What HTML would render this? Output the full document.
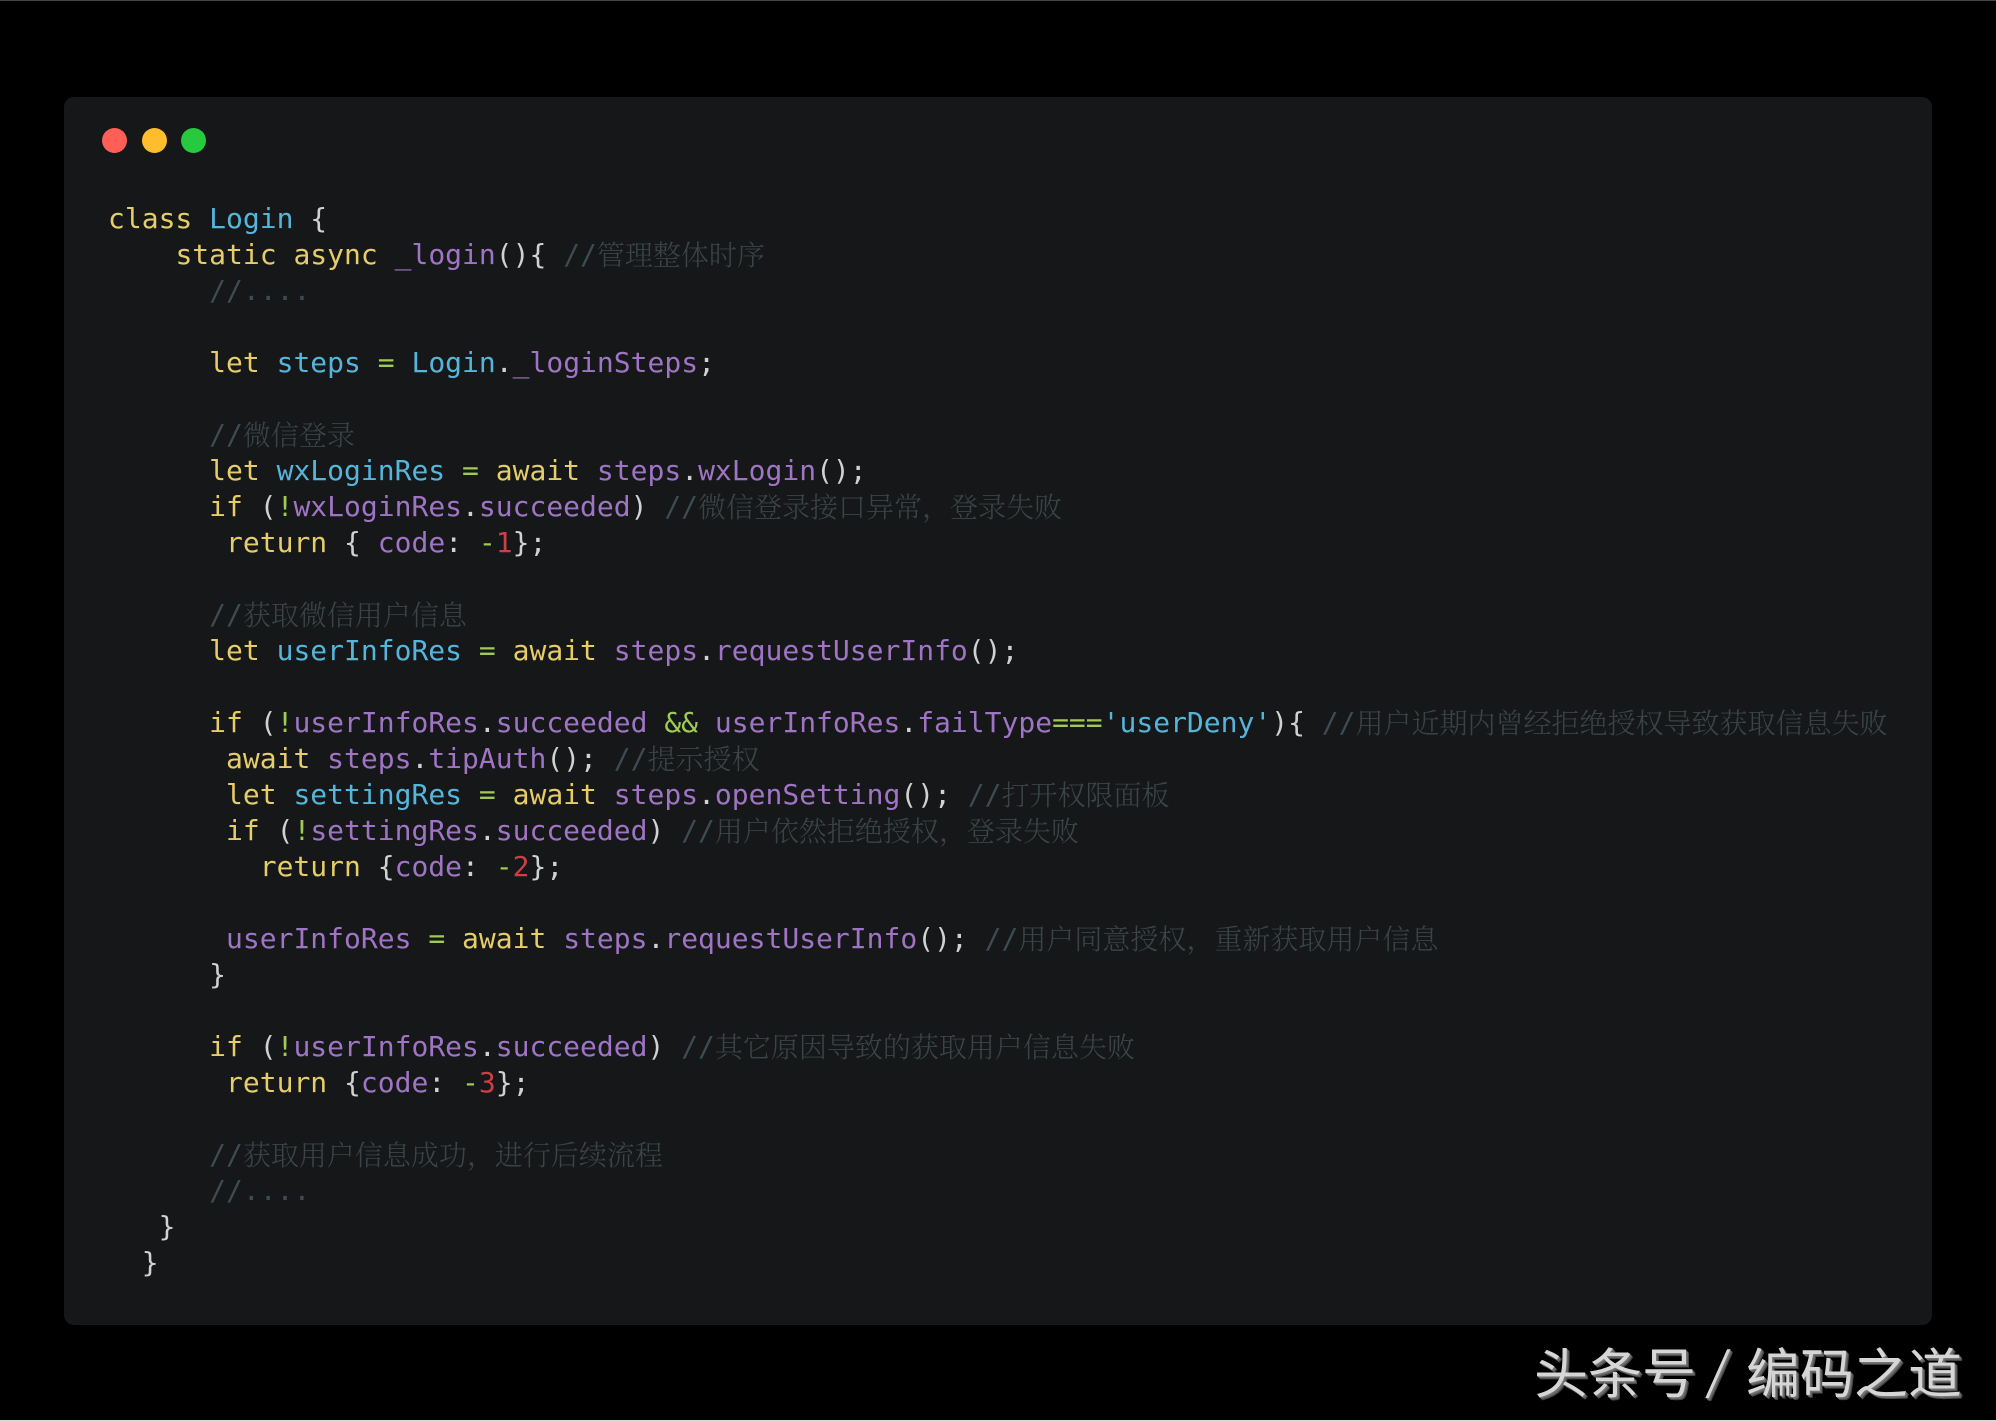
<!DOCTYPE html>
<html lang="zh">
<head>
<meta charset="utf-8">
<title>Code</title>
<style>
html,body{margin:0;padding:0;background:#000;}
body{position:relative;width:1996px;height:1422px;overflow:hidden;}
.tl{position:absolute;left:0;top:0;width:1996px;height:1px;background:#444;}
.bl{position:absolute;left:0;top:1420px;width:1996px;height:2px;background:#d8d8d8;}
.card{position:absolute;left:64px;top:97px;width:1868px;height:1228px;background:#151718;border-radius:10px;}
.dot{position:absolute;top:128px;width:25px;height:25px;border-radius:50%;}
pre{position:absolute;left:108px;top:201px;margin:0;font-family:"DejaVu Sans Mono","Noto Serif CJK SC",monospace;font-size:28px;line-height:36px;color:#cfd2d1;white-space:pre;}
.k{color:#e6cd69}.b{color:#55b5db}.p{color:#a074c4}.o{color:#9fca56}.n{color:#cd3f45}
.c{color:#3c4c52;}
.z{color:#3a4447;position:relative;top:1px;font-style:normal;font-weight:300;}
.wm{position:absolute;top:1333px;font-family:"Noto Sans CJK SC","Liberation Sans",sans-serif;font-size:54px;line-height:74px;color:#d6d6d6;white-space:pre;text-shadow:1px 1px 0 #777,2px 2px 0 #666,3px 3px 0 #444;}
</style>
</head>
<body>
<div class="tl"></div>
<div class="bl"></div>
<div class="card"></div>
<div class="dot" style="left:102px;background:#ff5f56"></div>
<div class="dot" style="left:141.5px;background:#ffbd2e"></div>
<div class="dot" style="left:181px;background:#27c93f"></div>
<pre><span class="k">class</span> <span class="b">Login</span> {
    <span class="k">static</span> <span class="k">async</span> <span class="p">_login</span>(){ <span class="c">//<i class="z">管理整体时序</i></span>
      <span class="c">//....</span>

      <span class="k">let</span> <span class="b">steps</span> <span class="o">=</span> <span class="b">Login</span>.<span class="p">_loginSteps</span>;

      <span class="c">//<i class="z">微信登录</i></span>
      <span class="k">let</span> <span class="b">wxLoginRes</span> <span class="o">=</span> <span class="k">await</span> <span class="p">steps</span>.<span class="p">wxLogin</span>();
      <span class="k">if</span> (<span class="o">!</span><span class="p">wxLoginRes</span>.<span class="p">succeeded</span>) <span class="c">//<i class="z">微信登录接口异常，登录失败</i></span>
       <span class="k">return</span> { <span class="p">code</span>: <span class="o">-</span><span class="n">1</span>};

      <span class="c">//<i class="z">获取微信用户信息</i></span>
      <span class="k">let</span> <span class="b">userInfoRes</span> <span class="o">=</span> <span class="k">await</span> <span class="p">steps</span>.<span class="p">requestUserInfo</span>();

      <span class="k">if</span> (<span class="o">!</span><span class="p">userInfoRes</span>.<span class="p">succeeded</span> <span class="o">&amp;&amp;</span> <span class="p">userInfoRes</span>.<span class="p">failType</span><span class="o">===</span><span class="b">'userDeny'</span>){ <span class="c">//<i class="z">用户近期内曾经拒绝授权导致获取信息失败</i></span>
       <span class="k">await</span> <span class="p">steps</span>.<span class="p">tipAuth</span>(); <span class="c">//<i class="z">提示授权</i></span>
       <span class="k">let</span> <span class="b">settingRes</span> <span class="o">=</span> <span class="k">await</span> <span class="p">steps</span>.<span class="p">openSetting</span>(); <span class="c">//<i class="z">打开权限面板</i></span>
       <span class="k">if</span> (<span class="o">!</span><span class="p">settingRes</span>.<span class="p">succeeded</span>) <span class="c">//<i class="z">用户依然拒绝授权，登录失败</i></span>
         <span class="k">return</span> {<span class="p">code</span>: <span class="o">-</span><span class="n">2</span>};

       <span class="p">userInfoRes</span> <span class="o">=</span> <span class="k">await</span> <span class="p">steps</span>.<span class="p">requestUserInfo</span>(); <span class="c">//<i class="z">用户同意授权，重新获取用户信息</i></span>
      }

      <span class="k">if</span> (<span class="o">!</span><span class="p">userInfoRes</span>.<span class="p">succeeded</span>) <span class="c">//<i class="z">其它原因导致的获取用户信息失败</i></span>
       <span class="k">return</span> {<span class="p">code</span>: <span class="o">-</span><span class="n">3</span>};

      <span class="c">//<i class="z">获取用户信息成功，进行后续流程</i></span>
      <span class="c">//....</span>
   }
  }</pre>
<div class="wm" style="left:1534px">头条号</div>
<div class="wm" style="left:1709px;font-size:50px;top:1331px;transform:skewX(-8deg)">/</div>
<div class="wm" style="left:1746px">编码之道</div>
</body>
</html>
